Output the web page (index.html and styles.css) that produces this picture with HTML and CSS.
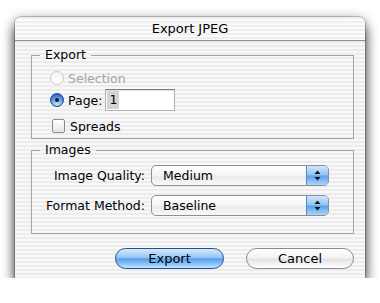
FILE: index.html
```html
<!DOCTYPE html>
<html lang="en">
<head>
    <meta charset="UTF-8">
    <title>Export JPEG</title>
    <link rel="stylesheet" href="styles.css">
</head>
<body>
    <div class="window">
        <div class="titlebar">Export JPEG</div>
        <div class="content">
            <fieldset class="group">
                <legend>Export</legend>
                <div class="row row-first">
                    <span class="radio radio-off"></span>
                    <span class="disabled">Selection</span>
                </div>
                <div class="row row-page">
                    <span class="radio radio-on"></span>
                    <span>Page:</span>
                    <span class="textfield"><span class="selected">1</span></span>
                </div>
                <div class="row row-last">
                    <span class="checkbox"></span>
                    <span>Spreads</span>
                </div>
            </fieldset>

            <fieldset class="group group-images">
                <legend>Images</legend>
                <div class="form-grid">
                    <label>Image Quality:</label>
                    <div class="popup">
                        <span class="popup-value">Medium</span>
                        <span class="popup-cap">
                            <svg width="7" height="11" viewBox="0 0 7 11"><path d="M3.5 0.5 L6.5 4 L0.5 4 Z M3.5 10.5 L6.5 7 L0.5 7 Z" fill="#111"/></svg>
                        </span>
                    </div>
                    <label>Format Method:</label>
                    <div class="popup">
                        <span class="popup-value">Baseline</span>
                        <span class="popup-cap">
                            <svg width="7" height="11" viewBox="0 0 7 11"><path d="M3.5 0.5 L6.5 4 L0.5 4 Z M3.5 10.5 L6.5 7 L0.5 7 Z" fill="#111"/></svg>
                        </span>
                    </div>
                </div>
            </fieldset>

            <div class="buttons">
                <button class="btn btn-default">Export</button>
                <button class="btn">Cancel</button>
            </div>
        </div>
    </div>
</body>
</html>
```

FILE: styles.css
```css
/* dialog in the old aqua look */
body {
    margin: 0;
    background-color: #fff;
    font-family: "DejaVu Sans", "Liberation Sans", sans-serif;
    font-size: 12.5px;
    color: #000;
}
.window {
    margin: 17px 0 0 15px;
    width: 350px;
    height: 261px;
    border-radius: 6px 6px 0 0;
    background: repeating-linear-gradient(#ececec 0 2px, #f8f8f8 2px 4px);
    box-shadow: 0 0 0 1px rgba(0, 0, 0, 0.2), 0 9px 12px rgba(0, 0, 0, 0.65), 0 3px 14px rgba(0, 0, 0, 0.4);
}
.titlebar {
    height: 24px;
    box-sizing: border-box;
    border-bottom: 1px solid #8c8c8c;
    border-radius: 6px 6px 0 0;
    background: repeating-linear-gradient(#efefef 0 2px, #fbfbfb 2px 4px);
    text-align: center;
    font-size: 13px;
    line-height: 23px;
}
.content {
    padding: 0 11px 0 16px;
}
.group {
    margin: 6px 0 0;
    padding: 0 12px 3px 8px;
    border: 1px solid #a4a4a4;
    min-inline-size: 0;
}
.group legend {
    padding: 0 5px;
    line-height: 16px;
}
.group-images {
    margin-top: 3px;
    padding-bottom: 17px;
}
.row {
    display: flex;
    align-items: center;
    height: 18px;
    margin-left: 10px;
}
.row-first {
    margin-top: 6px;
}
.row-page {
    height: 22px;
    margin-top: 2px;
}
.row-last {
    margin-top: 6px;
}
.disabled {
    color: #a6a6a6;
}
.radio {
    width: 14px;
    height: 14px;
    box-sizing: border-box;
    border-radius: 50%;
    margin-right: 4px;
    flex: none;
}
.radio-off {
    border: 1px solid #c9c9c9;
    background: linear-gradient(#f4f4f4, #ffffff);
}
.radio-on {
    position: relative;
    border: 1px solid #23478c;
    background: radial-gradient(circle at 50% 85%, #bfe6ff 0, #68a6f0 45%, #2762c8 85%);
}
.radio-on::after {
    content: "";
    position: absolute;
    left: 4px;
    top: 4px;
    width: 4px;
    height: 4px;
    border-radius: 50%;
    background-color: #1a1a1a;
}
.checkbox {
    width: 13px;
    height: 14px;
    box-sizing: border-box;
    margin: 0 5px 0 2px;
    border: 1px solid #8c8c8c;
    border-radius: 2px;
    background: linear-gradient(#ffffff, #e6e6e6);
    flex: none;
}
.textfield {
    display: flex;
    align-items: center;
    width: 70px;
    height: 22px;
    box-sizing: border-box;
    margin-left: 3px;
    padding-left: 1px;
    border: 1px solid #b2b2b2;
    border-top-color: #7c7c7c;
    background-color: #fff;
    box-shadow: inset 0 1px 1px rgba(0, 0, 0, 0.12);
}
.selected {
    background-color: #d4d4d4;
    padding: 1px 2px;
    line-height: 16px;
}
.form-grid {
    display: grid;
    grid-template-columns: 105px 178px;
    column-gap: 6px;
    row-gap: 9px;
    align-items: center;
    margin-top: 7px;
}
.form-grid label {
    text-align: right;
}
.popup {
    display: flex;
    align-items: center;
    height: 21px;
    box-sizing: border-box;
    border: 1px solid #8f8f8f;
    border-radius: 5px;
    background: linear-gradient(#ffffff 0%, #f4f4f4 50%, #e9e9e9 51%, #f8f8f8 100%);
    overflow: hidden;
}
.popup-value {
    flex: 1;
    padding-left: 11px;
}
.popup-cap {
    display: flex;
    align-items: center;
    justify-content: center;
    width: 21px;
    height: 100%;
    border-left: 1px solid #5a86c4;
    background: linear-gradient(#cfe6fd 0%, #8fc2f4 48%, #5b9fea 52%, #a9d6fd 100%);
}
.buttons {
    display: flex;
    justify-content: flex-end;
    gap: 22px;
    margin-top: 14px;
}
.btn {
    width: 108px;
    height: 21px;
    box-sizing: border-box;
    padding: 0;
    border: 1px solid #8a8a8a;
    border-radius: 11px;
    background: linear-gradient(#ffffff 0%, #f2f2f2 48%, #e2e2e2 52%, #ffffff 100%);
    font-family: inherit;
    font-size: 13px;
    color: #000;
}
.btn-default {
    width: 109px;
    border-color: #234f97;
    background: linear-gradient(#d6eafc 0%, #94c5f4 45%, #5b9ce8 52%, #8cc6fa 80%, #c4e6ff 100%);
}
```
